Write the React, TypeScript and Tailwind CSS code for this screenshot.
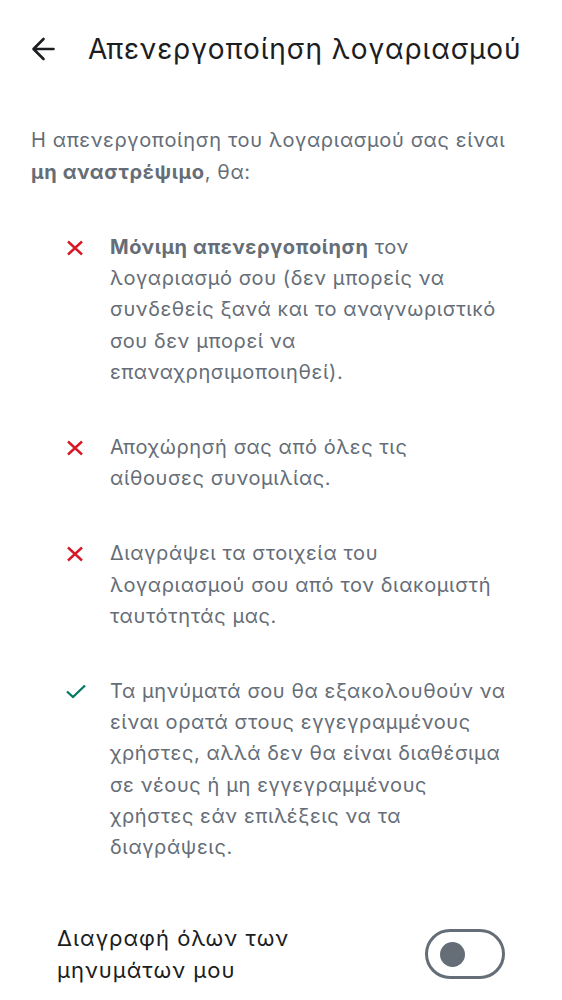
import React from "react";

const font = { fontFamily: "Inter, 'Noto Sans', sans-serif" };

function XIcon() {
  return (
    <svg width="18" height="16" viewBox="0 0 18 16" className="block">
      <path d="M2 1.5 L16 14.5 M16 1.5 L2 14.5" stroke="#d51928" strokeWidth="2.4" strokeLinecap="butt" fill="none" />
    </svg>
  );
}

function CheckIcon() {
  return (
    <svg width="20" height="15" viewBox="0 0 20 15" className="block">
      <path d="M1 7.5 L7 13 L19 1.5" stroke="#007a61" strokeWidth="2.3" fill="none" strokeLinejoin="miter" />
    </svg>
  );
}

function Item({ icon, lines }: { icon: React.ReactNode; lines: React.ReactNode[] }) {
  return (
    <div className="flex">
      <div className="w-[47px] shrink-0 h-[31px] flex items-center pl-[3px]">{icon}</div>
      <div className="text-[20px] leading-[31.2px] tracking-[0.6px] text-[#656d77]">
        {lines.map((l, i) => (
          <div key={i} className="whitespace-nowrap">{l}</div>
        ))}
      </div>
    </div>
  );
}

export default function App() {
  return (
    <div className="w-[562px] h-[1000px] bg-white overflow-hidden" style={font}>
      <div className="h-[100px] flex items-center pl-[31px] pb-[3px]">
        <svg width="24" height="24" viewBox="0 0 24 24" className="block">
          <path d="M22.5 12 H3 M12.5 2 L2.5 12 L12.5 22" stroke="#1b1d22" strokeWidth="2.6" fill="none" strokeLinecap="round" strokeLinejoin="round" />
        </svg>
        <h1 className="ml-[33px] text-[28px] leading-[36px] text-[#1b1d22] font-normal tracking-[0.9px] whitespace-nowrap">
          Απενεργοποίηση λογαριασμού
        </h1>
      </div>

      <div className="pl-[31px] pt-[24px] text-[20px] leading-[32px] tracking-[0.65px] text-[#656d77]">
        <div className="whitespace-nowrap">Η απενεργοποίηση του λογαριασμού σας είναι</div>
        <div className="whitespace-nowrap">
          <span className="font-bold">μη αναστρέψιμο</span>, θα:
        </div>
      </div>

      <div className="pl-[63px] pt-[44px] flex flex-col gap-[44px]">
        <Item
          icon={<XIcon />}
          lines={[
            <><span className="font-bold">Μόνιμη απενεργοποίηση</span> τον</>,
            "λογαριασμό σου (δεν μπορείς να",
            "συνδεθείς ξανά και το αναγνωριστικό",
            "σου δεν μπορεί να",
            "επαναχρησιμοποιηθεί).",
          ]}
        />
        <Item icon={<XIcon />} lines={["Αποχώρησή σας από όλες τις", "αίθουσες συνομιλίας."]} />
        <Item
          icon={<XIcon />}
          lines={["Διαγράψει τα στοιχεία του", "λογαριασμού σου από τον διακομιστή", "ταυτότητάς μας."]}
        />
        <Item
          icon={<CheckIcon />}
          lines={[
            "Τα μηνύματά σου θα εξακολουθούν να",
            "είναι ορατά στους εγγεγραμμένους",
            "χρήστες, αλλά δεν θα είναι διαθέσιμα",
            "σε νέους ή μη εγγεγραμμένους",
            "χρήστες εάν επιλέξεις να τα",
            "διαγράψεις.",
          ]}
        />
      </div>

      <div className="flex items-center justify-between pl-[57px] pr-[57px] mt-[59px]">
        <div className="text-[22px] leading-[32px] tracking-[1px] text-[#1b1d22]">
          <div className="whitespace-nowrap">Διαγραφή όλων των</div>
          <div className="whitespace-nowrap">μηνυμάτων μου</div>
        </div>
        <div className="w-[80px] h-[50px] rounded-full border-[3px] border-[#656d77] flex items-center pl-[12px]">
          <div className="w-[25px] h-[25px] rounded-full bg-[#656d77]" />
        </div>
      </div>
    </div>
  );
}
